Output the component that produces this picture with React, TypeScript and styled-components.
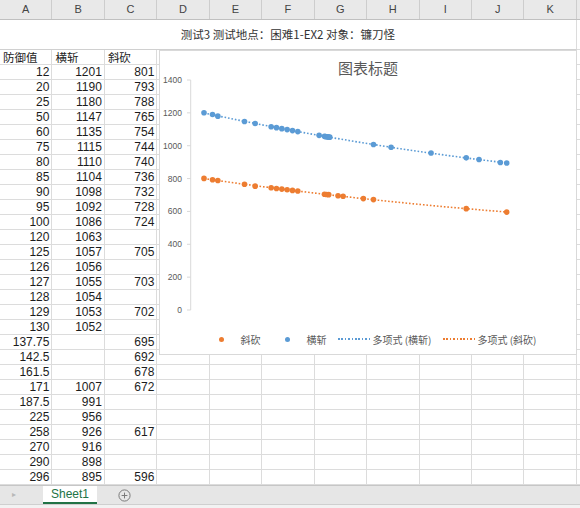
import React from "react";
import styled, { createGlobalStyle } from "styled-components";

const GlobalStyle = createGlobalStyle`
  html, body { margin: 0; padding: 0; background: #fff; }
  body { font-family: "Liberation Sans", Arial, sans-serif; }
`;

const COLS = ["A", "B", "C", "D", "E", "F", "G", "H", "I", "J", "K"];
const COL_TEMPLATE = "repeat(11, 52.45px) 1fr";
const CJK = `"Noto Sans CJK SC", "Noto Sans", sans-serif`;
const NUM = `"Liberation Sans Narrow", "Liberation Sans", Arial, sans-serif`;

const BLUE = "#5b9bd5";
const ORANGE = "#ed7d31";

// 防御值 / 横斩 / 斜砍
const rows: [number, number | null, number | null][] = [
  [12, 1201, 801],
  [20, 1190, 793],
  [25, 1180, 788],
  [50, 1147, 765],
  [60, 1135, 754],
  [75, 1115, 744],
  [80, 1110, 740],
  [85, 1104, 736],
  [90, 1098, 732],
  [95, 1092, 728],
  [100, 1086, 724],
  [120, 1063, null],
  [125, 1057, 705],
  [126, 1056, null],
  [127, 1055, 703],
  [128, 1054, null],
  [129, 1053, 702],
  [130, 1052, null],
  [137.75, null, 695],
  [142.5, null, 692],
  [161.5, null, 678],
  [171, 1007, 672],
  [187.5, 991, null],
  [225, 956, null],
  [258, 926, 617],
  [270, 916, null],
  [290, 898, null],
  [296, 895, 596],
];

const Page = styled.div`
  width: 580px;
  height: 508px;
  display: flex;
  flex-direction: column;
  overflow: hidden;
  background: #fff;
`;

const ColumnBar = styled.div`
  display: grid;
  grid-template-columns: ${COL_TEMPLATE};
  height: 20px;
  flex-shrink: 0;
  box-sizing: border-box;
  background: #e9e9e9;
  border-bottom: 1px solid #c0c0c0;
`;

const ColumnLetter = styled.div`
  border-right: 1px solid #cdcdcd;
  text-align: center;
  line-height: 19px;
  font-size: 11px;
  color: #444;
`;

const SheetBody = styled.div`
  position: relative;
  flex: 1;
  overflow: hidden;
`;

const Grid = styled.div`
  display: grid;
  grid-template-columns: ${COL_TEMPLATE};
  grid-template-rows: 30px;
  grid-auto-rows: 15.03px;
`;

const Cell = styled.div<{ $align?: "left" | "right"; $cjk?: boolean; $last?: boolean }>`
  box-sizing: border-box;
  border-bottom: 1px solid #dcdcdc;
  border-right: ${(p) => (p.$last ? "none" : "1px solid #dcdcdc")};
  padding: 0 2px 0 3px;
  text-align: ${(p) => p.$align ?? "right"};
  font-family: ${(p) => (p.$cjk ? CJK : NUM)};
  font-size: ${(p) => (p.$cjk ? "11.5px" : "12px")};
  line-height: 14px;
  color: #1c1c1c;
  white-space: nowrap;
  overflow: hidden;
`;

const TitleCell = styled.div`
  grid-column: 1 / 12;
  box-sizing: border-box;
  border-bottom: 1px solid #d0d0d0;
  border-right: 1px solid #dcdcdc;
  text-align: center;
  font-family: ${CJK};
  font-size: 11.5px;
  line-height: 29px;
  color: #333;
`;

const Chart = styled.div`
  position: absolute;
  left: 159px;
  top: 30px;
  width: 418px;
  height: 305px;
  box-sizing: border-box;
  background: #fff;
  border: 1px solid #d9d9d9;
  display: flex;
  flex-direction: column;
`;

const ChartTitle = styled.div`
  margin-top: 6px;
  height: 21px;
  line-height: 21px;
  text-align: center;
  font-family: ${CJK};
  font-size: 15px;
  color: #595959;
`;

const Plot = styled.svg`
  display: block;
  margin-top: -6px;
`;

const Legend = styled.div`
  margin-top: 12px;
  height: 18px;
  display: flex;
  align-items: center;
  justify-content: center;
  gap: 11px;
  padding-left: 6px;
  font-family: ${CJK};
  font-size: 10px;
  color: #595959;
`;

const LegendItem = styled.div`
  display: flex;
  align-items: center;
  gap: 3px;
`;

const Marker = styled.span`
  width: 32px;
  height: 6px;
  display: flex;
  align-items: center;
  justify-content: center;
`;

const Dot = styled.span<{ $color: string }>`
  width: 5px;
  height: 5px;
  border-radius: 50%;
  background: ${(p) => p.$color};
`;

const DottedLine = styled.span<{ $color: string }>`
  width: 32px;
  height: 1.6px;
  background-image: repeating-linear-gradient(
    to right,
    ${(p) => p.$color} 0 1.6px,
    transparent 1.6px 3.4px
  );
`;

const TabBar = styled.div`
  height: 19px;
  flex-shrink: 0;
  box-sizing: border-box;
  background: #e6e6e6;
  border-top: 1px solid #c6c6c6;
  display: flex;
  align-items: stretch;
`;

const TabArrow = styled.span`
  width: 43px;
  padding-left: 12px;
  box-sizing: border-box;
  font-size: 8px;
  line-height: 18px;
  color: #b8b8b8;
`;

const SheetTab = styled.div`
  width: 54px;
  box-sizing: border-box;
  background: #fff;
  border-bottom: 2px solid #217346;
  text-align: center;
  font-size: 12px;
  line-height: 16px;
  color: #217346;
`;

const AddSheet = styled.span`
  margin-left: 21px;
  display: flex;
  align-items: center;
`;

const StatusStrip = styled.div`
  height: 3px;
  flex-shrink: 0;
  background: #f2f2f2;
  border-top: 1px solid #cfcfcf;
`;

// least squares quadratic, returns [a, b, c] for y = a + b x + c x^2
function quadFit(xs: number[], ys: number[]) {
  const s = [0, 0, 0, 0, 0];
  const t = [0, 0, 0];
  xs.forEach((x, i) => {
    for (let k = 0; k < 5; k++) s[k] += x ** k;
    for (let k = 0; k < 3; k++) t[k] += ys[i] * x ** k;
  });
  const m = [
    [s[0], s[1], s[2], t[0]],
    [s[1], s[2], s[3], t[1]],
    [s[2], s[3], s[4], t[2]],
  ];
  for (let i = 0; i < 3; i++) {
    for (let j = i + 1; j < 3; j++) {
      const f = m[j][i] / m[i][i];
      for (let k = i; k < 4; k++) m[j][k] -= f * m[i][k];
    }
  }
  const r = [0, 0, 0];
  for (let i = 2; i >= 0; i--) {
    let v = m[i][3];
    for (let k = i + 1; k < 3; k++) v -= m[i][k] * r[k];
    r[i] = v / m[i][i];
  }
  return r;
}

const sx = (u: number) => 31.2 + u * 1.066;
const sy = (v: number) => 238 - v * (230 / 1400);

function series(idx: 1 | 2) {
  const pts = rows.filter((r) => r[idx] !== null).map((r) => [r[0], r[idx] as number]);
  const xs = pts.map((p) => p[0]);
  const ys = pts.map((p) => p[1]);
  const [a, b, c] = quadFit(xs, ys);
  const x0 = Math.min(...xs);
  const x1 = Math.max(...xs);
  const line: string[] = [];
  for (let i = 0; i <= 40; i++) {
    const u = x0 + ((x1 - x0) * i) / 40;
    line.push(`${sx(u).toFixed(1)},${sy(a + b * u + c * u * u).toFixed(1)}`);
  }
  return { pts, line: line.join(" ") };
}

const PlotArea = () => {
  const blue = series(1);
  const orange = series(2);
  const ticks = [0, 200, 400, 600, 800, 1000, 1200, 1400];
  return (
    <Plot width="416" height="246">
      <line x1="30.7" y1={sy(1400)} x2="30.7" y2={sy(0)} stroke="#d9d9d9" strokeWidth="1" />
      {ticks.map((t) => (
        <g key={t}>
          <line x1="27" y1={sy(t)} x2="30.7" y2={sy(t)} stroke="#d9d9d9" strokeWidth="1" />
          <text
            x="22"
            y={sy(t) + 3}
            textAnchor="end"
            fontFamily="Liberation Sans, Arial, sans-serif"
            fontSize="8.5"
            fill="#595959"
          >
            {t}
          </text>
        </g>
      ))}
      <polyline points={blue.line} fill="none" stroke={BLUE} strokeWidth="1.6" strokeDasharray="1.6 1.9" />
      <polyline points={orange.line} fill="none" stroke={ORANGE} strokeWidth="1.6" strokeDasharray="1.6 1.9" />
      {orange.pts.map(([u, v]) => (
        <circle key={`o${u}`} cx={sx(u)} cy={sy(v)} r="2.8" fill={ORANGE} />
      ))}
      {blue.pts.map(([u, v]) => (
        <circle key={`b${u}`} cx={sx(u)} cy={sy(v)} r="2.8" fill={BLUE} />
      ))}
    </Plot>
  );
};

const fmt = (v: number | null) => (v === null ? "" : String(v));

export default function App() {
  return (
    <>
      <GlobalStyle />
      <Page>
        <ColumnBar>
          {COLS.map((c) => (
            <ColumnLetter key={c}>{c}</ColumnLetter>
          ))}
          <div />
        </ColumnBar>
        <SheetBody>
          <Grid>
            <TitleCell>测试3 测试地点：困难1-EX2 对象：镰刀怪</TitleCell>
            <Cell $last />
            <Cell $cjk $align="left">防御值</Cell>
            <Cell $cjk $align="left">横斩</Cell>
            <Cell $cjk $align="left">斜砍</Cell>
            {COLS.slice(3).map((c) => (
              <Cell key={c} />
            ))}
            <Cell $last />
            {rows.map((r) => (
              <React.Fragment key={r[0]}>
                <Cell>{fmt(r[0])}</Cell>
                <Cell>{fmt(r[1])}</Cell>
                <Cell>{fmt(r[2])}</Cell>
                {COLS.slice(3).map((c) => (
                  <Cell key={c} />
                ))}
                <Cell $last />
              </React.Fragment>
            ))}
          </Grid>
          <Chart>
            <ChartTitle>图表标题</ChartTitle>
            <PlotArea />
            <Legend>
              <LegendItem>
                <Marker>
                  <Dot $color={ORANGE} />
                </Marker>
                斜砍
              </LegendItem>
              <LegendItem>
                <Marker>
                  <Dot $color={BLUE} />
                </Marker>
                横斩
              </LegendItem>
              <LegendItem>
                <Marker>
                  <DottedLine $color={BLUE} />
                </Marker>
                多项式 (横斩)
              </LegendItem>
              <LegendItem>
                <Marker>
                  <DottedLine $color={ORANGE} />
                </Marker>
                多项式 (斜砍)
              </LegendItem>
            </Legend>
          </Chart>
        </SheetBody>
        <TabBar>
          <TabArrow>▸</TabArrow>
          <SheetTab>Sheet1</SheetTab>
          <AddSheet>
            <svg width="13" height="13" viewBox="0 0 13 13">
              <circle cx="6.5" cy="6.5" r="5.6" fill="none" stroke="#7a7a7a" strokeWidth="1" />
              <line x1="6.5" y1="3.6" x2="6.5" y2="9.4" stroke="#7a7a7a" strokeWidth="1" />
              <line x1="3.6" y1="6.5" x2="9.4" y2="6.5" stroke="#7a7a7a" strokeWidth="1" />
            </svg>
          </AddSheet>
        </TabBar>
        <StatusStrip />
      </Page>
    </>
  );
}
